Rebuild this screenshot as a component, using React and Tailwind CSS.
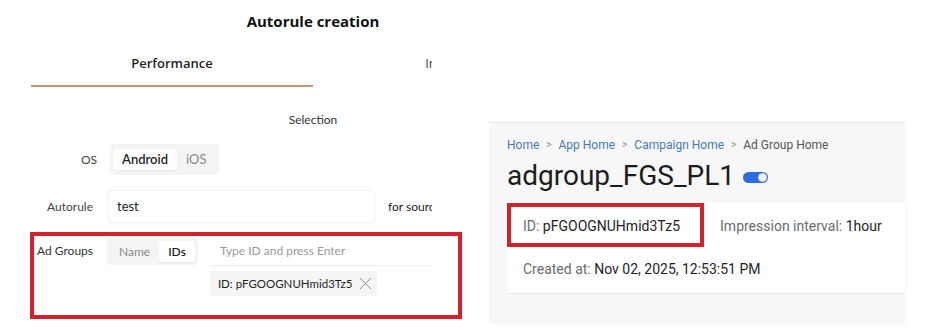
import React from 'react';
import { X } from 'lucide-react';

const Segment = ({ options, active, className = '', size = 'text-[13px]' }) => (
    <div className={`flex items-center rounded-[4px] bg-[#f4f4f4] p-[3px] ${size} ${className}`}>
        {options.map((opt) => (
            <span
                key={opt}
                className={
                    opt === active
                        ? 'rounded-[3px] bg-white px-[9px] leading-[21px] text-[#1f1f1f] font-semibold shadow-[0_1px_2px_rgba(0,0,0,0.06)]'
                        : 'px-[9px] leading-[21px] text-[#8a8a8a]'
                }
            >
                {opt}
            </span>
        ))}
    </div>
);

const AutoruleForm = () => (
    <div className="relative h-[335px] w-[470px] shrink-0 font-['Lato',sans-serif]">
        <div className="h-full w-[432px] overflow-hidden">
            <div className="ml-[31px] w-[564px] text-[12px] text-[#2b2b2b]">
                <h1 className="pt-[10px] text-center font-['Open_Sans',sans-serif] text-[15px] font-bold leading-[22px] text-[#111]">
                    Autorule creation
                </h1>

                {/* tabs */}
                <div className="mt-[21px] flex font-['Open_Sans',sans-serif] text-[13px]">
                    <div className="w-[282px] border-b-2 border-[#c9936c] pb-[12px] text-center font-semibold leading-[20px] text-[#1f1f1f]">
                        Performance
                    </div>
                    <div className="w-[282px] pb-[12px] text-center leading-[20px] text-[#444]">Inventory</div>
                </div>

                <p className="mt-[24px] text-center leading-[18px] text-[#333]">Selection</p>

                {/* OS */}
                <div className="mt-[15px] flex items-center">
                    <span className="w-[66px] text-right text-[#444]">OS</span>
                    <Segment options={['Android', 'iOS']} active="Android" className="ml-[13px] h-[31px]" />
                </div>

                {/* Autorule */}
                <div className="mt-[15px] flex items-center">
                    <span className="w-[62px] text-right text-[#444]">Autorule</span>
                    <div className="ml-[15px] flex h-[33px] w-[267px] items-center rounded-[4px] border border-[#f1f1f1] bg-white px-[8px] text-[13px] text-[#222] shadow-[0_0_3px_rgba(0,0,0,0.04)]">
                        test
                    </div>
                    <span className="ml-[13px] whitespace-nowrap text-[#222]">for source</span>
                </div>

                {/* Ad Groups */}
                <div className="mt-[14px] flex items-start">
                    <span className="mt-[4px] w-[62px] whitespace-nowrap pl-[6px] leading-[20px] text-[#333]">Ad Groups</span>
                    <Segment options={['Name', 'IDs']} active="IDs" size="text-[12px]" className="ml-[14px] mt-[1px] h-[27px]" />
                    <div className="ml-[12px] flex flex-col">
                        <div className="flex h-[29px] w-[260px] items-center border-b border-[#eeeeee] px-[10px] text-[#9a9a9a]">
                            Type ID and press Enter
                        </div>
                        <div className="mt-[5px] flex h-[25px] w-fit items-center gap-[3px] rounded-[3px] bg-[#f5f5f5] pl-[8px] pr-[1px] text-[11.5px] text-[#1f1f1f]">
                            ID: pFGOOGNUHmid3Tz5
                            <X size={21} strokeWidth={1.1} className="text-[#8a8a8a]" />
                        </div>
                    </div>
                </div>
            </div>
        </div>

        {/* highlight annotation */}
        <div className="absolute left-[30px] top-[232px] h-[87px] w-[432px] border-4 border-[#d3222a]" />
    </div>
);

const AdGroupHome = () => (
    <div className="ml-[20px] mt-[122px] h-[200px] w-[415px] shrink-0 border-t border-[#e7e7e7] bg-[#f7f7f8] pl-[17px] shadow-[0_2px_4px_rgba(0,0,0,0.05)] font-['Roboto',sans-serif]">
        <nav className="flex items-center gap-[7px] pt-[13px] text-[12px] leading-[18px]">
            <span className="text-[#4a78b5]">Home</span>
            <span className="text-[10px] text-[#888]">&gt;</span>
            <span className="text-[#4a78b5]">App Home</span>
            <span className="text-[10px] text-[#888]">&gt;</span>
            <span className="text-[#4a78b5]">Campaign Home</span>
            <span className="text-[10px] text-[#888]">&gt;</span>
            <span className="text-[#555]">Ad Group Home</span>
        </nav>

        <div className="mt-[5px] flex items-center">
            <h2 className="text-[28px] leading-[34px] text-[#1c1c1c]">adgroup_FGS_PL1</h2>
            <div className="ml-[8px] mt-[2px] flex h-[11px] w-[25px] items-center justify-end rounded-full bg-[#2e6be3] pr-[1px]">
                <span className="h-[9px] w-[9px] rounded-full border border-[#d9d9d9] bg-white" />
            </div>
        </div>

        <div className="relative ml-[1px] mt-[10px] border-b border-[#e6e6e6] bg-white pb-[14px] pl-[15px] pt-[13px] text-[14px] leading-[20px]">
            <div className="flex">
                <p>
                    <span className="text-[#6b6b6b]">ID: </span>
                    <span className="text-[#1e1e1e]">pFGOOGNUHmid3Tz5</span>
                </p>
                <p className="ml-[40px]">
                    <span className="text-[#6b6b6b]">Impression interval: </span>
                    <span className="text-[#1e1e1e]">1hour</span>
                </p>
            </div>
            <p className="mt-[23px]">
                <span className="text-[#6b6b6b]">Created at: </span>
                <span className="text-[#1e1e1e]">Nov 02, 2025, 12:53:51 PM</span>
            </p>

            {/* highlight annotation */}
            <div className="absolute -left-[1px] top-0 h-[44px] w-[197px] border-4 border-[#d3222a]" />
        </div>
    </div>
);

const App = () => (
    <div className="flex h-[335px] w-[947px] overflow-hidden bg-white">
        <AutoruleForm />
        <AdGroupHome />
    </div>
);

export default App;
